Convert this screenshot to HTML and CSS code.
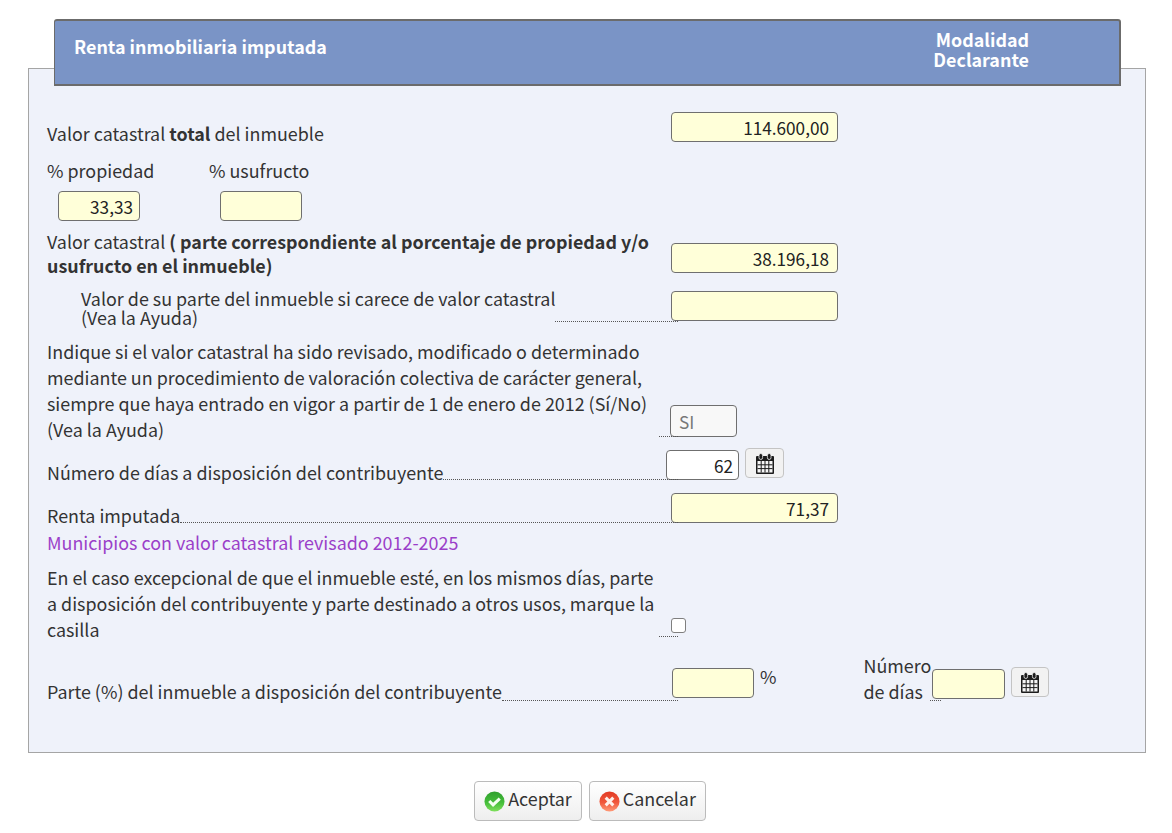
FILE: index.html
```html
<!DOCTYPE html>
<html lang="es">
<head>
    <meta charset="UTF-8">
    <title>Renta inmobiliaria imputada</title>
    <link rel="stylesheet" href="styles.css">
</head>
<body>
<svg width="0" height="0" class="defs">
    <defs>
        <symbol id="cal" viewBox="0 0 18 21">
            <rect x="0" y="3" width="18" height="18" rx="1" fill="#1c1c1c"/>
            <rect x="3" y="0.5" width="3.6" height="6" rx="1.8" fill="#1c1c1c" stroke="#f4f4f4" stroke-width=".8"/>
            <rect x="11.4" y="0.5" width="3.6" height="6" rx="1.8" fill="#1c1c1c" stroke="#f4f4f4" stroke-width=".8"/>
            <path d="M1.5 8h15v11.5h-15z" fill="#f6f6f6"/>
            <path d="M1.5 11.8h15M1.5 15.6h15M5.2 8v11.5M9 8v11.5M12.8 8v11.5" stroke="#1c1c1c" stroke-width="1"/>
        </symbol>
        <linearGradient id="okFill" x1="0" y1="0" x2="0" y2="1">
            <stop offset="0" stop-color="#2f9f2e"/>
            <stop offset=".55" stop-color="#45bd3a"/>
            <stop offset="1" stop-color="#7fe05c"/>
        </linearGradient>
        <linearGradient id="koFill" x1="0" y1="0" x2="0" y2="1">
            <stop offset="0" stop-color="#e23a24"/>
            <stop offset=".55" stop-color="#f0583c"/>
            <stop offset="1" stop-color="#ff9a78"/>
        </linearGradient>
    </defs>
</svg>
<div class="panel">
    <div class="head">
        <div class="head-title">Renta inmobiliaria imputada</div>
        <div class="head-side">Modalidad<br>Declarante</div>
    </div>

    <div class="row r1">
        <div class="label"><span class="txt">Valor catastral <b>total</b> del inmueble</span></div>
        <input class="inp wide" type="text" value="114.600,00">
    </div>

    <div class="row r2a">
        <span class="pct-label">% propiedad</span>
        <span class="pct-label">% usufructo</span>
    </div>
    <div class="row r2b">
        <input class="inp small first" type="text" value="33,33">
        <input class="inp small second" type="text" value="">
    </div>

    <div class="row r3">
        <div class="label"><span class="txt lh24">Valor catastral <b>( parte correspondiente al porcentaje de propiedad y/o usufructo en el inmueble)</b></span></div>
        <input class="inp wide" type="text" value="38.196,18">
    </div>

    <div class="row r4">
        <div class="label"><span class="txt lh19 indent">Valor de su parte del inmueble si carece de valor catastral<br>(Vea la Ayuda)</span><span class="leader"></span></div>
        <input class="inp wide" type="text" value="">
    </div>

    <div class="row r5">
        <div class="label"><span class="txt">Indique si el valor catastral ha sido revisado, modificado o determinado mediante un procedimiento de valoración colectiva de carácter general, siempre que haya entrado en vigor a partir de 1 de enero de 2012 (Sí/No) (Vea la Ayuda)</span><span class="leader"></span></div>
        <input class="inp si" type="text" value="SI">
    </div>

    <div class="row r6">
        <div class="label"><span class="txt">Número de días a disposición del contribuyente</span><span class="leader"></span></div>
        <input class="inp days" type="text" value="62">
        <button class="cal-btn" type="button"><svg width="18" height="21"><use href="#cal"/></svg></button>
    </div>

    <div class="row r7">
        <div class="label"><span class="txt">Renta imputada</span><span class="leader"></span></div>
        <input class="inp wide" type="text" value="71,37">
    </div>

    <div class="row r8">
        <a class="link" href="#">Municipios con valor catastral revisado 2012-2025</a>
    </div>

    <div class="row r9">
        <div class="label"><span class="txt">En el caso excepcional de que el inmueble esté, en los mismos días, parte a disposición del contribuyente y parte destinado a otros usos, marque la casilla</span><span class="leader"></span></div>
        <input class="check" type="checkbox">
    </div>

    <div class="row r10">
        <div class="label"><span class="txt">Parte (%) del inmueble a disposición del contribuyente</span><span class="leader"></span></div>
        <input class="inp small part" type="text" value="">
        <span class="pct-sign">%</span>
        <span class="num-dias">Número<br>de días</span>
        <span class="leader short"></span>
        <input class="inp dias-input" type="text" value="">
        <button class="cal-btn last" type="button"><svg width="18" height="21"><use href="#cal"/></svg></button>
    </div>
</div>

<div class="actions">
    <button class="btn" type="button">
        <svg width="21" height="21" viewBox="0 0 22 22"><circle cx="11" cy="11" r="10.5" fill="url(#okFill)"/><path d="M5.5 10.5l4 4 7-6.5" fill="none" stroke="#f4fff0" stroke-width="3.2"/></svg>
        Aceptar
    </button>
    <button class="btn" type="button">
        <svg width="21" height="21" viewBox="0 0 22 22"><circle cx="11" cy="11" r="10.5" fill="url(#koFill)"/><path d="M7 7l8 8M15 7l-8 8" fill="none" stroke="#fff0ea" stroke-width="3.2"/></svg>
        Cancelar
    </button>
</div>
</body>
</html>
```

FILE: styles.css
```css
html, body {
    margin: 0;
    padding: 0;
    background: #fff;
    font-family: "Noto Sans CJK SC", "Noto Sans", sans-serif;
    font-size: 17.9px;
    color: #333;
}

.defs {
    display: block;
    height: 0;
}

.panel {
    box-sizing: border-box;
    width: 1118px;
    margin: 68px 0 0 28px;
    padding: 0 0 48px 18px;
    background: #eff2fa;
    border: 1px solid #a5a5a5;
}

.head {
    box-sizing: border-box;
    display: flex;
    align-items: flex-start;
    justify-content: space-between;
    width: 1067px;
    height: 67px;
    margin: -50px 0 0 7px;
    padding: 8px 90px 0 19px;
    background: #7a94c6;
    border: 2px solid #6b6b6b;
    border-left-width: 1px;
    border-radius: 3px 3px 0 0;
    color: #fff;
    font-weight: 700;
}

.head-title {
    margin-top: 7px;
    line-height: 20px;
}

.head-side {
    text-align: right;
    line-height: 20px;
}

.row {
    display: flex;
    align-items: flex-end;
}

.label {
    display: flex;
    align-items: flex-end;
    flex: 0 0 631px;
}

.txt {
    max-width: 612px;
    line-height: 26px;
}

.lh24 {
    line-height: 24px;
}

.lh19 {
    line-height: 19px;
}

.indent {
    padding-left: 34px;
}

.leader {
    position: relative;
    flex: 1;
    margin-bottom: 5px;
    border-bottom: 1px dotted #555;
}

.leader.short {
    flex: 0 0 11px;
    margin-left: -1px;
    margin-right: -9px;
}

.inp {
    box-sizing: border-box;
    height: 30px;
    padding: 0 8px;
    border: 1px solid #6f6f6f;
    border-radius: 4px;
    background: #ffffd9;
    font: inherit;
    font-size: 17.2px;
    color: #222;
    text-align: right;
}

.wide {
    width: 167px;
    margin: 0 0 4px -7px;
}

.small {
    width: 82px;
    padding: 0 6px;
}

.first {
    margin-left: 11px;
}

.second {
    margin-left: 80px;
}

.si {
    width: 67px;
    height: 32px;
    margin: 0 0 5px -8px;
    background: #f8f8f8;
    color: #777;
    text-align: left;
}

.days {
    width: 73px;
    margin: 0 0 5px -12px;
    padding: 0 5px;
    background: #fff;
}

.part {
    margin: 0 0 6px -6px;
}

.dias-input {
    width: 73px;
    margin-bottom: 5px;
    padding: 0 6px;
}

.pct-sign {
    margin: 0 0 15px 6px;
    line-height: 26px;
}

.num-dias {
    width: 68px;
    margin-left: 87px;
    line-height: 26px;
}

.cal-btn {
    display: flex;
    align-items: center;
    justify-content: center;
    box-sizing: border-box;
    width: 39px;
    height: 30px;
    margin: 0 0 7px 6px;
    padding: 0;
    border: 1px solid #c4c4c4;
    border-radius: 4px;
    background: #f2f2f2;
}

.cal-btn.last {
    width: 38px;
}

.check {
    appearance: none;
    box-sizing: border-box;
    width: 15px;
    height: 15px;
    margin: 0 0 9px -7px;
    background: #fff;
    border: 1px solid #7f7f7f;
    border-radius: 3px;
}

.link {
    line-height: 26px;
    color: #9b3fc9;
    text-decoration: none;
}

.pct-label {
    width: 162px;
    line-height: 26px;
}

.r1 { margin-top: 26px; }
.r2a { margin-top: 11px; }
.r2b { margin-top: 8px; }
.r3 { margin-top: 8px; }
.r4 { margin-top: 12px; }
.r5 { margin-top: 11px; }
.r6 { margin-top: 7px; height: 36px; }
.r7 { margin-top: 8px; }
.r8 { margin-top: 1px; }
.r9 { margin-top: 9px; }
.r10 { margin-top: 10px; }

.r4 .wide { margin-bottom: 6px; }
.r7 .wide { margin-bottom: 5px; }
.r10 .leader { margin-bottom: 3px; }

.actions {
    display: flex;
    justify-content: center;
    gap: 7px;
    margin-top: 28px;
    padding-left: 8px;
}

.btn {
    display: flex;
    align-items: center;
    gap: 3px;
    height: 40px;
    padding: 0 9px 6px;
    background: linear-gradient(#fff, #eee);
    border: 1px solid #bbb;
    border-radius: 4px;
    font: inherit;
    color: #333;
}

.btn svg {
    margin-top: 6px;
}
```
